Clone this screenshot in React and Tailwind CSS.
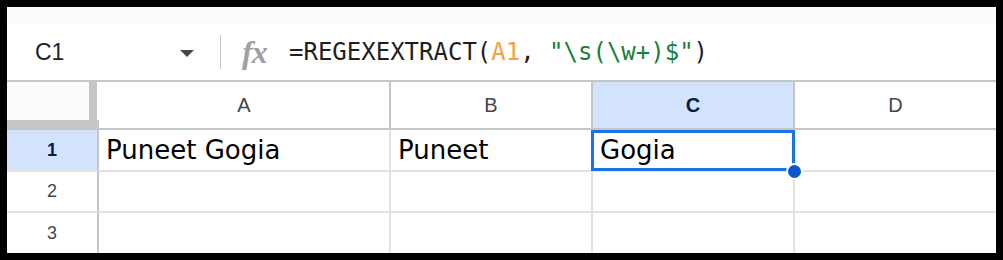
import React from 'react';

// Sheets snapshot: name box + formula bar + 4x3 grid, C1 selected
const COLS = [
  { key: 'A', w: 'w-[292px]' },
  { key: 'B', w: 'w-[202px]' },
  { key: 'C', w: 'w-[202px]' },
  { key: 'D', w: 'flex-1' },
];

const ROWS = [
  { n: 1, cells: { A: 'Puneet Gogia', B: 'Puneet', C: 'Gogia' }, h: 'h-[42px]' },
  { n: 2, cells: {}, h: 'h-[41px]' },
  { n: 3, cells: {}, h: 'h-[40px]' },
];

const FormulaBar = () => (
  <div className="h-[56px] bg-white flex items-center">
    <div className="w-[173px] pl-[28px] text-[23px] text-[#1f1f1f] font-['Liberation_Sans',Arial,sans-serif]">C1</div>
    <div className="w-0 h-0 border-l-[7px] border-r-[7px] border-t-[7px] border-l-transparent border-r-transparent border-t-[#444746] mt-[2px]" />
    <div className="ml-[26px] w-px h-[34px] bg-[#c7c7c7]" />
    <div className="ml-[21px] w-[27px] text-[32px] leading-none italic font-bold text-[#a0a0a0] font-['Liberation_Serif',serif] tracking-[-1px]">fx</div>
    <div className="ml-[20px] text-[24px] text-[#1f1f1f] font-['DejaVu_Sans_Mono',monospace] whitespace-pre">
      =REGEXEXTRACT(<span className="text-[#f4a13c]">A1</span>, <span className="text-[#188038]">"\s(\w+)$"</span>)
    </div>
  </div>
);

const HeaderRow = () => (
  <div className="h-[48px] flex">
    {/* corner */}
    <div className="w-[92px] flex flex-col">
      <div className="flex h-[38px]">
        <div className="w-[82px] bg-[#f9fbfd]" />
        <div className="w-[8px] bg-[#c4c7c5]" />
        <div className="w-[2px] bg-white" />
      </div>
      <div className="h-[10px] bg-[#c4c7c5]" />
    </div>
    {COLS.map((c, i) => (
      <div
        key={c.key}
        className={`${c.w} flex items-center justify-center border-b-2 border-[#c4c7c5] ${i < 3 ? 'border-r-2' : ''} ${c.key === 'C' ? 'bg-[#d3e3fd] text-[#041e49] font-bold' : 'bg-white text-[#444746]'} text-[20px] font-['Liberation_Sans',Arial,sans-serif]`}
      >
        {c.key}
      </div>
    ))}
  </div>
);

const Row = ({ row }) => (
  <div className={`${row.h} flex`}>
    <div
      className={`w-[92px] flex items-center justify-center border-r-2 border-r-[#c4c7c5] ${row.n < 3 ? 'border-b-2 border-b-[#e1e3e1]' : ''} ${row.n === 1 ? 'bg-[#d3e3fd] text-[#041e49] font-bold' : 'bg-white text-[#444746]'} text-[18px] font-['Liberation_Sans',Arial,sans-serif]`}
    >
      {row.n}
    </div>
    {COLS.map((c, i) => {
      const selected = row.n === 1 && c.key === 'C';
      return (
        <div
          key={c.key}
          className={`${c.w} relative flex items-center pl-[7px] border-[#e1e3e1] ${i < 3 ? 'border-r-2' : ''} ${row.n < 3 ? 'border-b-2' : ''} text-[26px] text-black font-['DejaVu_Sans',sans-serif]`}
        >
          {row.cells[c.key]}
          {selected && (
            <>
              <div className="absolute left-[-2px] top-0 w-[204px] h-[41px] border-[3px] border-[#1a73e8]" />
              <div className="absolute left-[193px] top-[33px] w-[17px] h-[17px] rounded-full bg-[#0b57d0] border-2 border-white z-10" />
            </>
          )}
        </div>
      );
    })}
  </div>
);

export default function App() {
  return (
    <div className="w-[1003px] h-[260px] bg-black pt-[7px] pl-[7px] pr-[7px] pb-[7px]">
      <div className="w-full h-full bg-white flex flex-col overflow-hidden">
        <div className="h-[17px] bg-[#f9fbfd]" />
        <FormulaBar />
        <div className="h-[2px] bg-[#c4c7c5]" />
        <HeaderRow />
        {ROWS.map((r) => (
          <Row key={r.n} row={r} />
        ))}
      </div>
    </div>
  );
}
